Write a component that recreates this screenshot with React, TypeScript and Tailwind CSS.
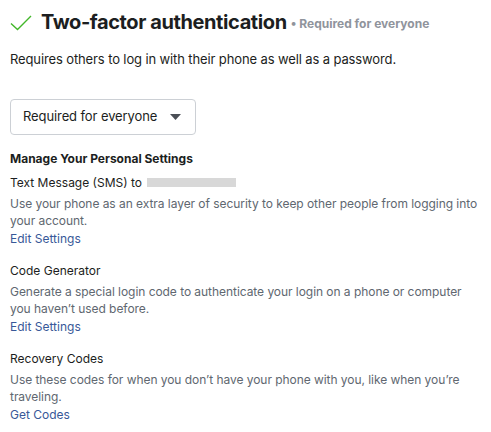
import React from "react";

function Section({ title, desc, link, extra }: { title: string; desc: string; link: string; extra?: React.ReactNode }) {
  return (
    <div className="flex flex-col">
      <div className="flex items-center h-[17px] text-[12px] leading-[17px] text-[#1c1e21]">
        <span>{title}</span>
        {extra}
      </div>
      <p className="mt-[4px] text-[12px] leading-[17px] text-[#606770] tracking-[-0.05px]">{desc}</p>
      <div className="mt-[1px] text-[12px] leading-[17px]">
        <a className="text-[#385898] cursor-pointer">{link}</a>
      </div>
    </div>
  );
}

export default function App() {
  return (
    <div
      className="w-[491px] h-[432px] bg-white pl-[10px] pr-[10px] pt-[10px] overflow-hidden"
      style={{ fontFamily: "Inter, 'Liberation Sans', sans-serif" }}
    >
      <div className="flex items-center h-[24px]">
        <svg width="22" height="16" viewBox="0 0 22 16" className="mr-[9px] mt-[2px]">
          <path d="M1 8.5 L7.5 14.5 L21 1" fill="none" stroke="#42b72a" strokeWidth="1.4" />
        </svg>
        <h1 className="text-[20px] font-bold leading-[24px] text-[#1c1e21] tracking-[-0.4px]">Two-factor authentication</h1>
        <span className="ml-[4px] mt-[3px] text-[12px] font-bold text-[#90949c]">• Required for everyone</span>
      </div>
      <p className="mt-[17px] text-[13px] leading-[17px] text-[#1c1e21] tracking-[-0.12px]">
        Requires others to log in with their phone as well as a password.
      </p>
      <button className="mt-[31px] flex items-center w-[186px] h-[36px] border border-[#ccd0d5] rounded-[4px] pl-[12px] pr-[14px] bg-white">
        <span className="text-[13px] text-[#1c1e21] tracking-[-0.1px]">Required for everyone</span>
        <svg width="11" height="6" viewBox="0 0 11 6" className="ml-auto">
          <path d="M0 0 H11 L5.5 6 Z" fill="#4b4f56" />
        </svg>
      </button>
      <div className="mt-[15px] h-[17px] text-[12px] leading-[17px] font-bold text-[#1c1e21]">Manage Your Personal Settings</div>
      <div className="mt-[7px] flex flex-col gap-[15px]">
        <Section
          title="Text Message (SMS) to"
          desc="Use your phone as an extra layer of security to keep other people from logging into your account."
          link="Edit Settings"
          extra={<span className="ml-[5px] inline-block w-[89px] h-[9px] bg-[#d8d8d8]" />}
        />
        <Section
          title="Code Generator"
          desc="Generate a special login code to authenticate your login on a phone or computer you haven’t used before."
          link="Edit Settings"
        />
        <Section
          title="Recovery Codes"
          desc="Use these codes for when you don’t have your phone with you, like when you’re traveling."
          link="Get Codes"
        />
      </div>
    </div>
  );
}
